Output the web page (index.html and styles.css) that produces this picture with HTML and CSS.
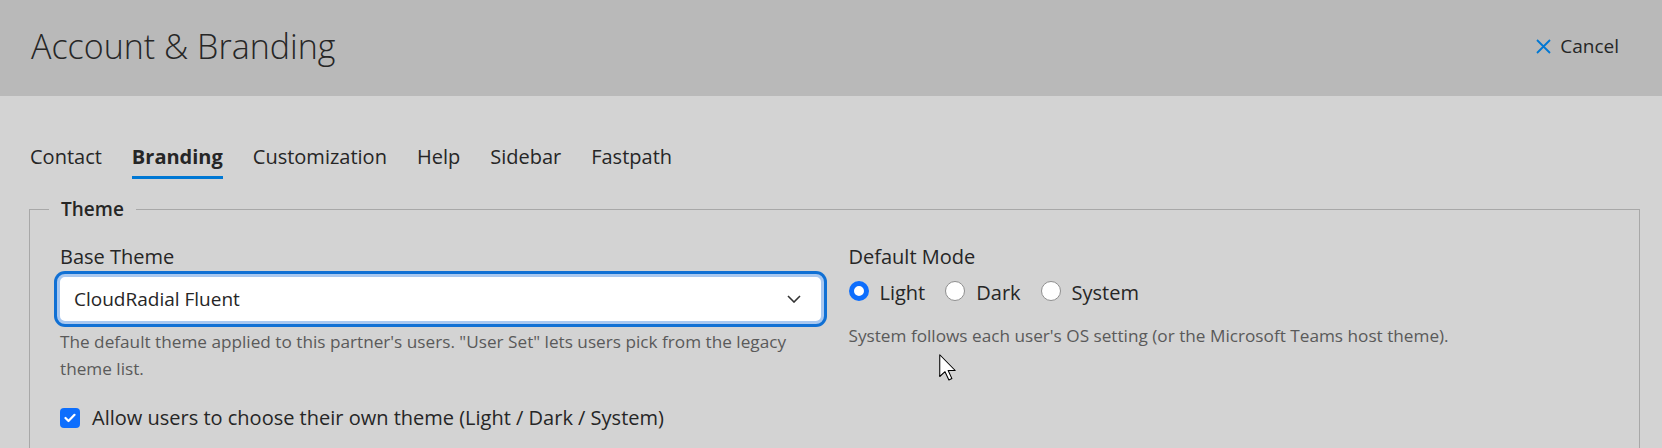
FILE: index.html
```html
<!DOCTYPE html>
<html lang="en">
<head>
  <meta charset="UTF-8">
  <title>Account &amp; Branding</title>
  <link rel="stylesheet" href="styles.css">
</head>
<body>

  <header class="topbar">
    <h1 class="page-title">Account &amp; Branding</h1>
    <button class="cancel-btn" type="button">
      <svg width="15" height="15" viewBox="0 0 15 15"><path d="M1 1 L14 14 M14 1 L1 14" stroke="#0078d4" stroke-width="1.8" fill="none"/></svg>
      Cancel
    </button>
  </header>

  <main class="page">
    <nav class="tabs">
      <a class="tab">Contact</a>
      <a class="tab active">Branding</a>
      <a class="tab">Customization</a>
      <a class="tab">Help</a>
      <a class="tab">Sidebar</a>
      <a class="tab">Fastpath</a>
    </nav>

    <fieldset class="group">
      <legend>Theme</legend>

      <div class="group-grid">
        <div class="field">
          <label class="field-label">Base Theme</label>
          <div class="select-box">
            <span>CloudRadial Fluent</span>
            <svg width="14" height="8" viewBox="0 0 14 8"><path d="M1 1 L7 7 L13 1" stroke="#333" stroke-width="1.6" fill="none"/></svg>
          </div>
          <p class="hint">The default theme applied to this partner's users. &quot;User Set&quot; lets users pick from the legacy theme list.</p>
        </div>

        <div class="field">
          <label class="field-label">Default Mode</label>
          <div class="radio-row">
            <label class="radio"><span class="radio-dot checked"></span>Light</label>
            <label class="radio"><span class="radio-dot"></span>Dark</label>
            <label class="radio"><span class="radio-dot"></span>System</label>
          </div>
          <p class="hint hint-spaced">System follows each user's OS setting (or the Microsoft Teams host theme).</p>
        </div>
      </div>

      <label class="check-row">
        <span class="check-box">
          <svg width="12" height="10" viewBox="0 0 12 10"><path d="M1.5 5 L4.5 8 L10.5 1.8" stroke="#fff" stroke-width="2.2" fill="none" stroke-linecap="round" stroke-linejoin="round"/></svg>
        </span>
        Allow users to choose their own theme (Light / Dark / System)
      </label>
    </fieldset>
  </main>

  <!-- mouse pointer -->
  <svg class="pointer" width="18" height="27" viewBox="0 0 12 18"><path d="M0.5 0.5 L0.5 15 L4 11.8 L6.6 17.3 L8.6 16.4 L6.1 11 L10.8 11 Z" fill="#fff" stroke="#000" stroke-width="0.7" stroke-linejoin="round"/></svg>

</body>
</html>
```

FILE: styles.css
```css
body {
  margin: 0;
  font-family: "Open Sans", "Noto Sans", sans-serif;
  background: #d3d3d3;
  color: #262626;
  height: 448px;
  overflow: hidden;
  position: relative;
}

.topbar {
  box-sizing: border-box;
  height: 96px;
  padding: 0 43px 4px 31px;
  background: #b9b9b9;
  display: flex;
  align-items: center;
  justify-content: space-between;
}

.page-title {
  margin: 0;
  font-size: 34px;
  font-weight: 300;
  line-height: 40px;
  color: #262626;
}

.cancel-btn {
  display: flex;
  align-items: center;
  gap: 9px;
  padding: 0;
  border: 0;
  background: none;
  font-family: inherit;
  font-size: 19px;
  line-height: 24px;
  color: #262626;
}

.page {
  padding: 0 22px 0 29px;
}

.tabs {
  display: flex;
  gap: 30px;
  padding: 47px 0 0 1px;
}

.tab {
  font-size: 20px;
  line-height: 28px;
  padding-bottom: 5px;
  border-bottom: 3px solid transparent;
  color: #262626;
}

.tab.active {
  font-weight: 700;
  border-bottom-color: #0078d4;
}

.group {
  margin: 16px 0 0;
  padding: 21px 30px 40px;
  border: 1px solid #a8a8a8;
  min-width: 0;
}

.group legend {
  margin-left: -11px;
  padding: 0 12px;
  font-size: 19px;
  font-weight: 600;
  line-height: 28px;
}

.group-grid {
  display: grid;
  grid-template-columns: 1fr 1fr;
  column-gap: 28px;
}

.field-label {
  display: block;
  margin-bottom: 4px;
  font-size: 20px;
  line-height: 26px;
}

.select-box {
  box-sizing: border-box;
  height: 50px;
  margin: 0 -3px;
  padding: 0 20px 0 14px;
  display: flex;
  align-items: center;
  justify-content: space-between;
  background: #fff;
  border: 3px solid #a9c8f0;
  border-radius: 8px;
  box-shadow: 0 0 0 3px #1070d4;
  font-size: 19px;
}

.hint {
  margin: 4px 0 0;
  font-size: 17.2px;
  line-height: 27px;
  color: #5a5a5a;
}

.hint-spaced {
  margin-top: 16px;
}

.radio-row {
  display: flex;
  margin-top: 10px;
}

.radio {
  display: flex;
  align-items: flex-start;
  gap: 11px;
  margin-right: 20px;
  font-size: 20px;
  line-height: 26px;
}

.radio-dot {
  box-sizing: border-box;
  width: 20px;
  height: 20px;
  margin-top: 1px;
  border: 1px solid #8f8f8f;
  border-radius: 50%;
  background: #fff;
}

.radio-dot.checked {
  border: 5px solid #0d6efd;
}

.check-row {
  display: flex;
  align-items: center;
  gap: 12px;
  margin-top: 23px;
  font-size: 20px;
  line-height: 26px;
}

.check-box {
  width: 20px;
  height: 20px;
  border-radius: 4px;
  background: #0d6efd;
  display: flex;
  align-items: center;
  justify-content: center;
}

.pointer {
  position: absolute;
  left: 939px;
  top: 354px;
}
```
